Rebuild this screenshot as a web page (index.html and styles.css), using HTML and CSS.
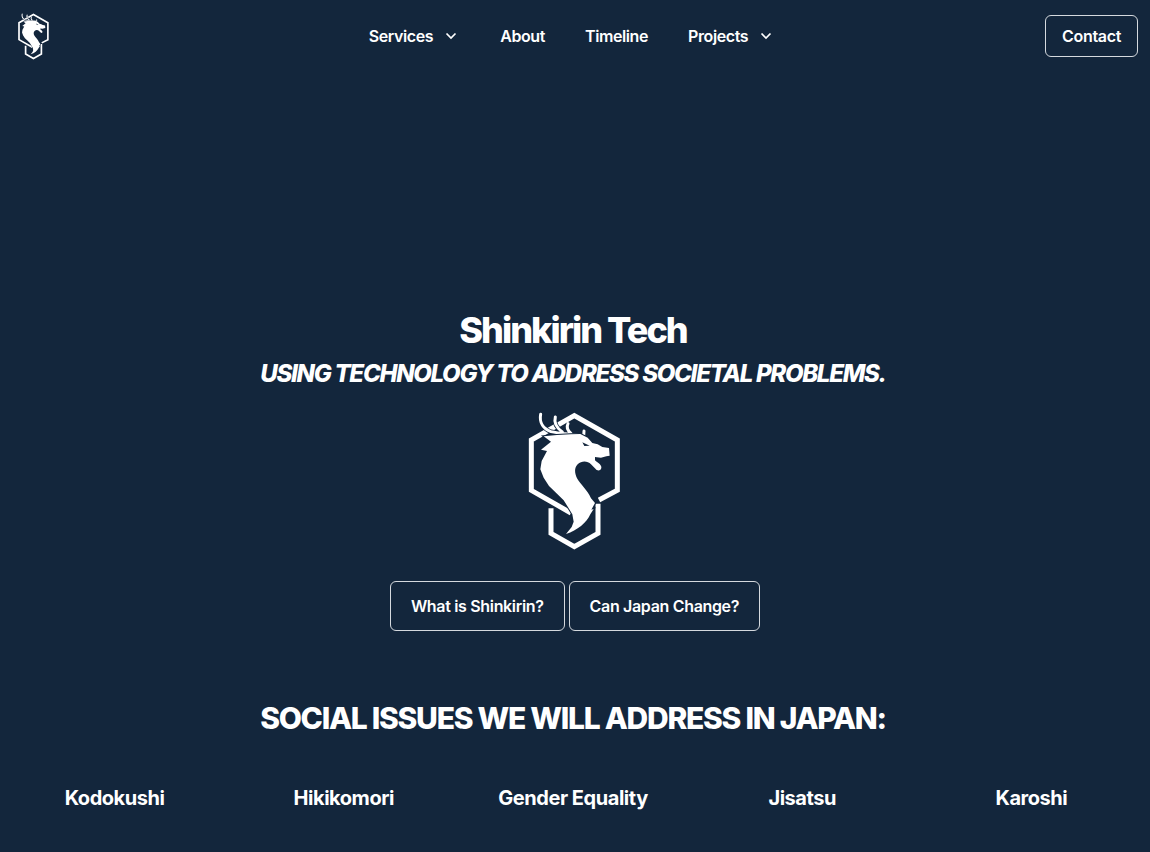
FILE: index.html
```html
<!DOCTYPE html>
<html lang="en">
<head>
    <meta charset="UTF-8">
    <meta name="viewport" content="width=device-width, initial-scale=1.0">
    <title>Shinkirin Tech</title>
    <link rel="stylesheet" href="styles.css">
</head>
<body>
    <svg class="defs" width="0" height="0" aria-hidden="true">
        <symbol id="dragon" viewBox="80 30 285 420">
            <path class="hex" d="M212 336 93 268V117L222 44 351 117V268L296 297"/>
            <path class="hex" d="M152 322V397L222 437 293 397V308"/>
            <path class="antler-halo" d="M121 40C116 66 130 84 152 92 180 99 215 98 246 104M165 48C160 66 168 80 186 93M203 68C198 78 201 88 212 97M251 90 250 106"/>
            <path class="antler" d="M121 40C116 66 130 84 152 92 180 99 215 98 246 104M165 48C160 66 168 80 186 93M203 68C198 78 201 88 212 97M251 90 250 106"/>
            <path class="body" d="M197 399C232 388 258 366 270 340L280 324 273 326 284 306 272 292C262 268 240 250 230 232 222 215 222 200 232 190 245 178 262 180 272 190L286 204C292 212 304 208 303 198 302 190 292 186 284 178L284 168 302 170 318 166 328 164 326 141 306 138 292 130 276 126 262 110 240 99 210 100 170 102 130 106 152 122 122 146 140 150 124 180 120 205 130 230 146 255 170 278 190 298 205 322 216 340 220 362 214 378Z"/>
            <path class="eye" d="M246 124 268 134 252 135Z"/>
        </symbol>
    </svg>

    <header class="topbar">
        <a class="brand" href="#"><svg class="brand-logo"><use href="#dragon"/></svg></a>
        <nav class="nav">
            <a href="#">Services <svg class="chevron" viewBox="0 0 12 8"><path d="M1.5 1.5 6 6l4.5-4.5"/></svg></a>
            <a href="#">About</a>
            <a href="#">Timeline</a>
            <a href="#">Projects <svg class="chevron" viewBox="0 0 12 8"><path d="M1.5 1.5 6 6l4.5-4.5"/></svg></a>
        </nav>
        <div class="topbar-end"><a class="btn btn-small" href="#">Contact</a></div>
    </header>

    <main>
        <section class="hero">
            <h1>Shinkirin Tech</h1>
            <p class="tagline">USING TECHNOLOGY TO ADDRESS SOCIETAL PROBLEMS.</p>
            <svg class="hero-logo"><use href="#dragon"/></svg>
            <div class="hero-actions">
                <a class="btn" href="#">What is Shinkirin?</a>
                <a class="btn" href="#">Can Japan Change?</a>
            </div>
        </section>

        <section class="issues">
            <h2>SOCIAL ISSUES WE WILL ADDRESS IN JAPAN:</h2>
            <div class="issue-grid">
                <h3>Kodokushi</h3>
                <h3>Hikikomori</h3>
                <h3>Gender Equality</h3>
                <h3>Jisatsu</h3>
                <h3>Karoshi</h3>
            </div>
        </section>
    </main>
</body>
</html>
```

FILE: styles.css
```css
body {
    margin: 0;
    height: 852px;
    overflow: hidden;
    background-color: #13263c;
    color: white;
    font-family: Inter, "Liberation Sans", sans-serif;
}
a {
    color: white;
    text-decoration: none;
}
.defs { display: block; }

/* dragon logo */
.hex {
    fill: none;
    stroke: white;
    stroke-width: 15;
}
.antler-halo {
    fill: none;
    stroke: #13263c;
    stroke-width: 13;
}
.antler {
    fill: none;
    stroke: white;
    stroke-width: 9;
    stroke-linecap: round;
}
.body {
    fill: white;
    stroke: #13263c;
    stroke-width: 6;
    paint-order: stroke;
}
.eye { fill: #13263c; }

.topbar {
    display: grid;
    grid-template-columns: 1fr auto 1fr;
    align-items: center;
    height: 72px;
    padding: 0 12px 0 17px;
}
.brand { display: flex; }
.brand-logo {
    width: 33px;
    height: 47px;
}
.nav {
    display: flex;
    gap: 40px;
    font-size: 16px;
    font-weight: 600;
    letter-spacing: -0.4px;
    margin-left: -11px;
}
.nav a {
    display: flex;
    align-items: center;
}
.chevron {
    width: 12px;
    height: 8px;
    margin: 0 3px 0 12px;
    fill: none;
    stroke: white;
    stroke-width: 1.7;
}
.topbar-end {
    display: flex;
    justify-content: flex-end;
}

.btn {
    display: flex;
    align-items: center;
    justify-content: center;
    height: 48px;
    padding: 0 20px;
    border: 1px solid #d5d9de;
    border-radius: 6px;
    font-size: 16px;
    font-weight: 600;
    letter-spacing: -0.33px;
}
.btn-small {
    height: 40px;
    padding: 0 16px;
}

.hero {
    display: flex;
    flex-direction: column;
    align-items: center;
    padding: 236px 4px 0 0;
}
h1 {
    margin: 0;
    font-size: 36px;
    line-height: 44px;
    font-weight: 800;
    letter-spacing: -1.95px;
}
.tagline {
    margin: 6px 0 0;
    font-size: 24px;
    line-height: 32px;
    font-weight: 800;
    font-style: italic;
    letter-spacing: -1.28px;
}
.hero-logo {
    width: 95px;
    height: 140px;
    margin: 21px 0 0 2px;
}
.hero-actions {
    display: flex;
    gap: 4px;
    margin: 30px 0 0 4px;
}

.issues { padding-right: 4px; }
h2 {
    margin: 69px 0 0;
    text-align: center;
    font-size: 30px;
    line-height: 36px;
    font-weight: 800;
    letter-spacing: -1.27px;
}
.issue-grid {
    display: grid;
    grid-template-columns: repeat(5, 1fr);
    margin-top: 48px;
}
h3 {
    margin: 0;
    text-align: center;
    font-size: 20px;
    line-height: 28px;
    font-weight: 700;
    letter-spacing: -0.45px;
}
```
